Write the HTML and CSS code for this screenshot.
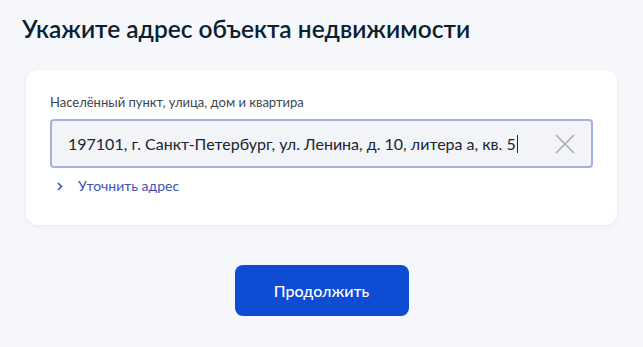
FILE: index.html
```html
<!DOCTYPE html>
<html lang="ru">
<head>
<meta charset="utf-8">
<link rel="stylesheet" href="styles.css">
</head>
<body>
<main class="page">
  <h1 class="title">Укажите адрес объекта недвижимости</h1>
  <section class="card">
    <label class="label" for="addr">Населённый пункт, улица, дом и квартира</label>
    <div class="field">
      <span class="value">197101, г. Санкт-Петербург, ул. Ленина, д. 10, литера а, кв. 5<span class="caret"></span></span>
      <svg class="clear" width="20" height="20" viewBox="0 0 20 20"><path d="M1 1L19 19M19 1L1 19" stroke="#a9acb2" stroke-width="1.6" fill="none"/></svg>
    </div>
    <a class="more" href="#"><svg class="chev" width="6" height="9" viewBox="0 0 6 9"><path d="M1 1L4.5 4.5L1 8" stroke="#3d52b8" stroke-width="1.6" fill="none"/></svg>Уточнить адрес</a>
  </section>
  <div class="actions">
    <button class="btn">Продолжить</button>
  </div>
</main>
</body>
</html>
```
FILE: styles.css
```css
html, body { margin: 0; padding: 0; }
body {
  background: #f5f7fb;
  font-family: Lato, "Noto Sans", sans-serif;
  color: #0b1f33;
  width: 643px;
  height: 347px;
  overflow: hidden;
}
.page { padding: 14px 26px 0 22px; }
.title {
  margin: 0 0 26px;
  font-size: 24.5px;
  font-weight: 600;
  line-height: 30px;
  color: #0b1f33;
}
.card {
  margin-left: 4px;
  width: 591px;
  box-sizing: border-box;
  background: #fff;
  border-radius: 12px;
  box-shadow: 0 1px 4px rgba(40, 60, 110, 0.08);
  padding: 24px 24px 30px;
}
.label {
  display: block;
  font-size: 13px;
  line-height: 17px;
  color: #3a4552;
  margin-bottom: 8px;
}
.field {
  height: 49px;
  box-sizing: border-box;
  border: 2px solid #a5b0e4;
  border-radius: 4px;
  background: #f2f4f8;
  display: flex;
  align-items: center;
  justify-content: space-between;
  padding: 0 16px 0 16px;
}
.value {
  font-size: 16px;
  color: #1a2533;
  display: flex;
  align-items: center;
}
.caret {
  display: inline-block;
  width: 1px;
  height: 18px;
  background: #1a2533;
  margin-left: 1px;
}
.clear { display: block; }
.more {
  display: flex;
  align-items: center;
  margin-top: 9px;
  font-size: 14px;
  line-height: 18px;
  color: #3d52b8;
  text-decoration: none;
}
.chev {
  display: block;
  margin-left: 7px;
  margin-right: 15px;
}
.actions {
  display: flex;
  justify-content: center;
  margin-top: 40px;
  margin-left: -22px;
  margin-right: -26px;
}
.btn {
  width: 174px;
  height: 51px;
  border: none;
  border-radius: 8px;
  background: #0d4cd3;
  color: #fff;
  font-family: Lato, "Noto Sans", sans-serif;
  font-size: 16px;
  font-weight: 500;
}
```
